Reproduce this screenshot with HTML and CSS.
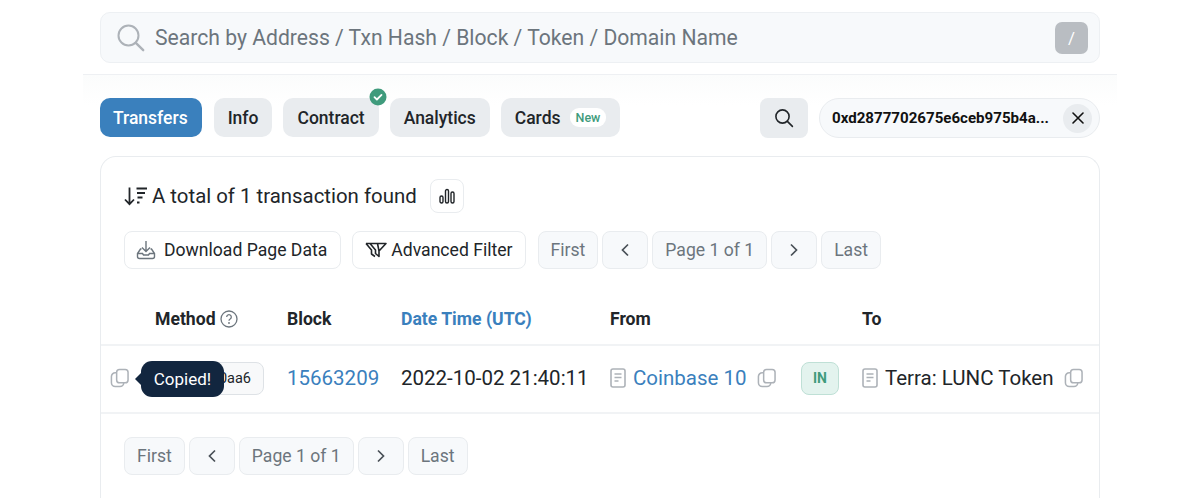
FILE: index.html
```html
<!DOCTYPE html>
<html lang="en">
<head>
  <meta charset="UTF-8" />
  <title>Token Transfers</title>
  <link rel="stylesheet" href="styles.css">
</head>
<body>
  <svg class="defs" width="0" height="0">
    <symbol id="copy" viewBox="0 0 20 20">
      <rect x="7" y="1" width="12" height="14" rx="3" fill="none" stroke="currentColor" stroke-width="1.6"/>
      <path d="M7 4.500h-1.500a4 4 0 0 0-4 4v6.500a4 4 0 0 0 4 4h5a4 4 0 0 0 4-4" fill="none" stroke="currentColor" stroke-width="1.6"/>
    </symbol>
    <symbol id="doc" viewBox="0 0 16 20">
      <rect x="1" y="1" width="14" height="18" rx="2" fill="none" stroke="currentColor" stroke-width="1.6"/>
      <path d="M4.500 6h7M4.500 9.500h7M4.500 13h4" fill="none" stroke="currentColor" stroke-width="1.5"/>
    </symbol>
  </svg>

  <div class="search-wrap">
    <div class="search-bar">
      <svg class="search-icon" width="28" height="28" viewBox="0 0 28 28">
        <circle cx="11.5" cy="11.5" r="10" fill="none" stroke="currentColor" stroke-width="2"/>
        <path d="M18.8 18.8l7.4 7.4" fill="none" stroke="currentColor" stroke-width="2.4" stroke-linecap="round"/>
      </svg>
      <span class="search-text">Search by Address / Txn Hash / Block / Token / Domain Name</span>
      <span class="slash-key">/</span>
    </div>
  </div>

  <div class="main">
    <div class="tabs-row">
      <div class="tabs">
        <a class="tab active">Transfers</a>
        <a class="tab">Info</a>
        <a class="tab tab-check">Contract
          <svg class="check-badge" width="18" height="18" viewBox="0 0 18 18">
            <circle cx="9" cy="9" r="8.5" fill="#3f9b7c"/>
            <path d="M5.500 9.200l2.400 2.300 4.600-4.600" fill="none" stroke="#fff" stroke-width="1.8" stroke-linecap="round" stroke-linejoin="round"/>
          </svg>
        </a>
        <a class="tab">Analytics</a>
        <a class="tab">Cards <span class="new-tag">New</span></a>
      </div>
      <div class="filter-group">
        <button class="filter-btn">
          <svg width="20" height="20" viewBox="0 0 20 20">
            <circle cx="8.500" cy="8.500" r="6.600" fill="none" stroke="currentColor" stroke-width="1.600"/>
            <path d="M13.400 13.400l5 5" fill="none" stroke="currentColor" stroke-width="1.600" stroke-linecap="round"/>
          </svg>
        </button>
        <div class="address-pill">
          <span>0xd2877702675e6ceb975b4a...</span>
          <span class="clear-btn">
            <svg width="12" height="12" viewBox="0 0 12 12">
              <path d="M1 1l10 10M11 1L1 11" fill="none" stroke="currentColor" stroke-width="1.6" stroke-linecap="round"/>
            </svg>
          </span>
        </div>
      </div>
    </div>

    <div class="card">
      <div class="summary">
        <svg class="sort-icon" width="24" height="20" viewBox="0 0 24 20">
          <path d="M5.500 1.500v16.500M1 13.500l4.500 4.700 4.500-4.700" fill="none" stroke="currentColor" stroke-width="1.800"/>
          <path d="M12.500 2.500h10.500M13 7h8M13.500 11.500h5M13 16.500h2.500" fill="none" stroke="currentColor" stroke-width="1.800"/>
        </svg>
        <span>A total of 1 transaction found</span>
        <span class="chart-btn">
          <svg width="16" height="16" viewBox="0 0 16 16">
            <rect x="1" y="8" width="3" height="7" rx="1.500" fill="none" stroke="currentColor" stroke-width="1.400"/>
            <rect x="6.500" y="1.500" width="3" height="13.500" rx="1.500" fill="none" stroke="currentColor" stroke-width="1.400"/>
            <rect x="12" y="4" width="3" height="11" rx="1.500" fill="none" stroke="currentColor" stroke-width="1.400"/>
          </svg>
        </span>
      </div>

      <div class="toolbar">
        <a class="btn btn-download">
          <svg class="btn-icon" width="20" height="20" viewBox="0 0 20 20">
            <path d="M10 1v10.500M6 7.500l4 4 4-4" fill="none" stroke="currentColor" stroke-width="1.400"/>
            <path d="M5.500 9H4.500L1.500 13.500v3a2 2 0 0 0 2 2h13a2 2 0 0 0 2-2v-3L15.500 9h-1M1.500 13.500h5l1 1.500h5l1-1.500h5" fill="none" stroke="currentColor" stroke-width="1.400"/>
          </svg>
          Download Page Data
        </a>
        <a class="btn btn-filter">
          <svg width="22" height="16" viewBox="0 0 22 16">
            <path d="M1 1.500h20l-7 7.500v5.500l-3.500-3V8L5 1.500M1 1.500L6.500 8v4l3.500 2.500M12.500 1.500l1.500 7.500" fill="none" stroke="currentColor" stroke-width="1.600" stroke-linejoin="round"/>
          </svg>
          Advanced Filter
        </a>
        <div class="pager">
          <a class="page-btn">First</a>
          <a class="page-btn page-arrow"><svg width="10" height="14" viewBox="0 0 10 14"><path d="M8 1.500L2.500 7 8 12.500" fill="none" stroke="currentColor" stroke-width="1.700"/></svg></a>
          <span class="page-btn">Page 1 of 1</span>
          <a class="page-btn page-arrow"><svg width="10" height="14" viewBox="0 0 10 14"><path d="M2 1.500L7.500 7 2 12.500" fill="none" stroke="currentColor" stroke-width="1.700"/></svg></a>
          <a class="page-btn">Last</a>
        </div>
      </div>

      <div class="table-row table-head">
        <div></div>
        <div class="method-head">Method
          <svg width="18" height="18" viewBox="0 0 18 18">
            <circle cx="9" cy="9" r="8" fill="none" stroke="#6c757d" stroke-width="1.300"/>
            <path d="M6.700 7a2.300 2.300 0 1 1 3.500 2c-.8.5-1.200.9-1.200 1.700" fill="none" stroke="#6c757d" stroke-width="1.300"/>
            <circle cx="9" cy="13" r=".9" fill="#6c757d"/>
          </svg>
        </div>
        <div>Block</div>
        <div class="sorted">Date Time (UTC)</div>
        <div>From</div>
        <div></div>
        <div>To</div>
      </div>

      <div class="table-row table-body">
        <div class="copy-cell">
          <svg class="copy-icon" width="19" height="20"><use href="#copy"/></svg>
          <span class="tooltip">Copied!</span>
        </div>
        <div><span class="method-pill">0x0aa6</span></div>
        <div><a class="link">15663209</a></div>
        <div>2022-10-02 21:40:11</div>
        <div class="addr">
          <svg class="doc-icon" width="16" height="20"><use href="#doc"/></svg>
          <a class="link">Coinbase 10</a>
          <svg class="copy-icon addr-copy" width="19" height="20"><use href="#copy"/></svg>
        </div>
        <div><span class="in-tag">IN</span></div>
        <div class="addr">
          <svg class="doc-icon" width="16" height="20"><use href="#doc"/></svg>
          <span>Terra: LUNC Token</span>
          <svg class="copy-icon addr-copy" width="19" height="20"><use href="#copy"/></svg>
        </div>
      </div>

      <div class="pager pager-bottom">
        <a class="page-btn">First</a>
        <a class="page-btn page-arrow"><svg width="10" height="14" viewBox="0 0 10 14"><path d="M8 1.500L2.500 7 8 12.500" fill="none" stroke="currentColor" stroke-width="1.700"/></svg></a>
        <span class="page-btn">Page 1 of 1</span>
        <a class="page-btn page-arrow"><svg width="10" height="14" viewBox="0 0 10 14"><path d="M2 1.500L7.500 7 2 12.500" fill="none" stroke="currentColor" stroke-width="1.700"/></svg></a>
        <a class="page-btn">Last</a>
      </div>
    </div>
  </div>
</body>
</html>
```

FILE: styles.css
```css
html, body {
  height: 498px;
  overflow: hidden;
}

body {
  font-family: 'Roboto', sans-serif;
  background-color: #fff;
  color: #212529;
  margin: 0;
  padding: 0;
}

.defs {
  display: block;
  height: 0;
}

.search-wrap {
  margin: 0 83px;
  padding: 12px 17px 11px;
  border-bottom: 1px solid #eef0f3;
}

.search-bar {
  height: 49px;
  display: flex;
  align-items: center;
  padding: 0 11px 0 16px;
  background-color: #f7f9fb;
  border: 1px solid #edf0f3;
  border-radius: 10px;
}

.search-icon {
  color: #adb2b8;
  margin-right: 10px;
}

.search-text {
  flex: 1;
  font-size: 21.15px;
  color: #6c757d;
}

.slash-key {
  width: 33px;
  height: 32px;
  display: flex;
  align-items: center;
  justify-content: center;
  background-color: #b9bdc2;
  border-radius: 7px;
  color: #fff;
  font-size: 17px;
}

.main {
  margin: 0 83px;
  padding: 23px 17px 0;
  background: linear-gradient(#fbfcfc, #fff 30px);
}

.tabs-row {
  display: flex;
  align-items: flex-start;
  justify-content: space-between;
  height: 40px;
}

.tabs {
  display: flex;
  gap: 11px;
}

.tab {
  position: relative;
  height: 39px;
  display: flex;
  align-items: center;
  padding: 0 14px;
  background-color: #e9ecef;
  border-radius: 10px;
  font-size: 17.5px;
  font-weight: 500;
  color: #212529;
}

.tab.active {
  padding: 0 14px 0 13px;
  margin-right: 1px;
  background-color: #3a80bd;
  color: #fff;
}

.check-badge {
  position: absolute;
  top: -10px;
  right: -8px;
}

.new-tag {
  margin-left: 9px;
  padding: 2px 6px;
  background-color: #fff;
  border-radius: 9px;
  font-size: 12.5px;
  font-weight: 500;
  color: #3f9b7c;
}

.filter-group {
  display: flex;
  align-items: center;
  gap: 11px;
}

.filter-btn {
  width: 48px;
  height: 40px;
  display: flex;
  align-items: center;
  justify-content: center;
  padding: 0;
  border: none;
  background-color: #e9ecef;
  border-radius: 8px;
  color: #212529;
}

.address-pill {
  width: 281px;
  height: 40px;
  box-sizing: border-box;
  display: flex;
  align-items: center;
  justify-content: space-between;
  padding: 0 7px 0 12px;
  background-color: #f7f9fb;
  border: 1px solid #e9ecef;
  border-radius: 20px;
  font-size: 15.1px;
  font-weight: 700;
  color: #111;
}

.clear-btn {
  width: 29px;
  height: 29px;
  display: flex;
  align-items: center;
  justify-content: center;
  background-color: #e9ecef;
  border-radius: 50%;
}

.card {
  margin-top: 18px;
  height: 341px;
  background-color: #fff;
  border: 1px solid #e9ecef;
  border-bottom: none;
  border-radius: 16px 16px 0 0;
}

.summary {
  display: flex;
  align-items: center;
  height: 34px;
  margin: 22px 0 0 23px;
  font-size: 20.4px;
  color: #212529;
}

.sort-icon {
  margin-right: 4px;
}

.chart-btn {
  width: 32px;
  height: 32px;
  display: flex;
  align-items: center;
  justify-content: center;
  margin-left: 13px;
  border: 1px solid #e9ecef;
  border-radius: 8px;
}

.toolbar {
  display: flex;
  align-items: center;
  gap: 11px;
  margin: 18px 0 0 23px;
}

.btn {
  height: 36px;
  display: flex;
  align-items: center;
  gap: 4px;
  padding: 0 12px;
  background-color: #fff;
  border: 1px solid #e9ecef;
  border-radius: 8px;
  font-size: 17.6px;
  color: #212529;
}

.btn-download {
  gap: 8px;
  padding: 0 13px 0 11px;
}

.btn-filter {
  margin-right: 1px;
}

.btn-icon {
  color: #6c757d;
}

.pager {
  display: flex;
  gap: 4px;
}

.page-btn {
  height: 36px;
  display: flex;
  align-items: center;
  padding: 0 12px;
  background-color: #f7f9fb;
  border: 1px solid #e9ecef;
  border-radius: 8px;
  font-size: 17.6px;
  color: #6c757d;
}

.page-arrow {
  width: 20px;
  justify-content: center;
  color: #495057;
}

.table-row {
  display: grid;
  grid-template-columns: 54px 132px 114px 209px 191px 61px 1fr;
  align-items: center;
  border-bottom: 2px solid #f1f3f5;
}

.table-head {
  height: 54px;
  margin-top: 23px;
  padding-top: 1px;
  font-size: 17.6px;
  font-weight: 700;
  color: #212529;
  box-sizing: border-box;
}

.method-head {
  display: flex;
  align-items: center;
  gap: 4px;
}

.sorted {
  color: #3a80bd;
}

.table-body {
  position: relative;
  height: 68px;
  box-sizing: border-box;
  padding-bottom: 2px;
  font-size: 20.5px;
  color: #212529;
}

.copy-cell {
  padding-left: 9px;
  display: flex;
}

.copy-icon {
  color: #adb2b8;
}

.tooltip {
  position: absolute;
  left: 40px;
  top: 15px;
  height: 36px;
  width: 83px;
  display: flex;
  align-items: center;
  justify-content: center;
  background-color: #12263f;
  border-radius: 11px;
  color: #fff;
  font-size: 17px;
}

.tooltip::before {
  content: "";
  position: absolute;
  left: -6px;
  top: 12px;
  border-style: solid;
  border-width: 6px 6px 6px 0;
  border-color: transparent #12263f transparent transparent;
}

.method-pill {
  display: block;
  width: 109px;
  height: 33px;
  box-sizing: border-box;
  line-height: 31px;
  padding-right: 12px;
  text-align: right;
  border: 1px solid #dee2e6;
  border-radius: 8px;
  background-color: #f8f9fa;
  font-size: 14.5px;
}

.link {
  color: #3a80bd;
}

.addr {
  display: flex;
  align-items: center;
}

.doc-icon {
  color: #adb2b8;
  margin-right: 7px;
}

.addr-copy {
  margin-left: 10px;
}

.in-tag {
  display: flex;
  align-items: center;
  justify-content: center;
  width: 38px;
  height: 33px;
  box-sizing: border-box;
  background-color: #e3f3ee;
  border: 1px solid #bfe0d6;
  border-radius: 8px;
  font-size: 14px;
  font-weight: 700;
  color: #3f9b7c;
}

.pager-bottom {
  margin: 23px 0 0 23px;
}
```
